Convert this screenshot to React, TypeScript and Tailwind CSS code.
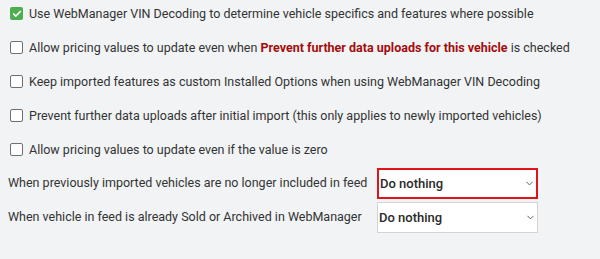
import { Check, ChevronDown } from "lucide-react";

// Import settings: checkbox options plus two dropdowns for feed handling.

const options = [
  { checked: true, text: "Use WebManager VIN Decoding to determine vehicle specifics and features where possible" },
  { checked: false, text: "Allow pricing values to update even when", strong: "Prevent further data uploads for this vehicle", after: "is checked" },
  { checked: false, text: "Keep imported features as custom Installed Options when using WebManager VIN Decoding" },
  { checked: false, text: "Prevent further data uploads after initial import (this only applies to newly imported vehicles)" },
  { checked: false, text: "Allow pricing values to update even if the value is zero" },
];

function Box({ checked }: { checked: boolean }) {
  if (checked) {
    return (
      <span className="flex h-[13px] w-[13px] shrink-0 items-center justify-center rounded-[2px] bg-[#4cae4f]">
        <Check className="h-[10px] w-[10px] text-white" strokeWidth={4} />
      </span>
    );
  }
  return <span className="h-[13px] w-[13px] shrink-0 rounded-[2px] border border-[#707070] bg-white" />;
}

function Dropdown({ focused }: { focused?: boolean }) {
  return (
    <div
      className={
        "flex h-[31px] w-[161px] items-center justify-between bg-white pl-[1px] pr-[1px] " +
        (focused ? "border-2 border-[#e0131a]" : "border border-[#d3d3d3]")
      }
    >
      <span className="text-[13px] font-medium text-[#2a2a2a]">Do nothing</span>
      <ChevronDown className="h-[11px] w-[11px] text-[#555]" strokeWidth={2} />
    </div>
  );
}

export default function App() {
  return (
    <div className="h-[259px] w-[600px] whitespace-nowrap bg-[#f1f3f5] pt-[6px] font-['Roboto',sans-serif] text-[12.5px] text-[#333]">
      <div className="flex flex-col">
        {options.map((o, i) => (
          <div key={i} className="flex h-[34px] items-start gap-[6px] pl-[10px]">
            <div className="flex h-[15px] items-center">
              <Box checked={o.checked} />
            </div>
            <p className="leading-[15px]">
              {o.text}
              {o.strong && (
                <>
                  {" "}
                  <b className="font-bold text-[#a30d0d]">{o.strong}</b> {o.after}
                </>
              )}
            </p>
          </div>
        ))}
      </div>
      <div className="-mt-[8px] grid grid-cols-[369px_auto] items-center gap-y-[3px] pl-[8px]">
        <span>When previously imported vehicles are no longer included in feed</span>
        <Dropdown focused />
        <span>When vehicle in feed is already Sold or Archived in WebManager</span>
        <Dropdown />
      </div>
    </div>
  );
}
